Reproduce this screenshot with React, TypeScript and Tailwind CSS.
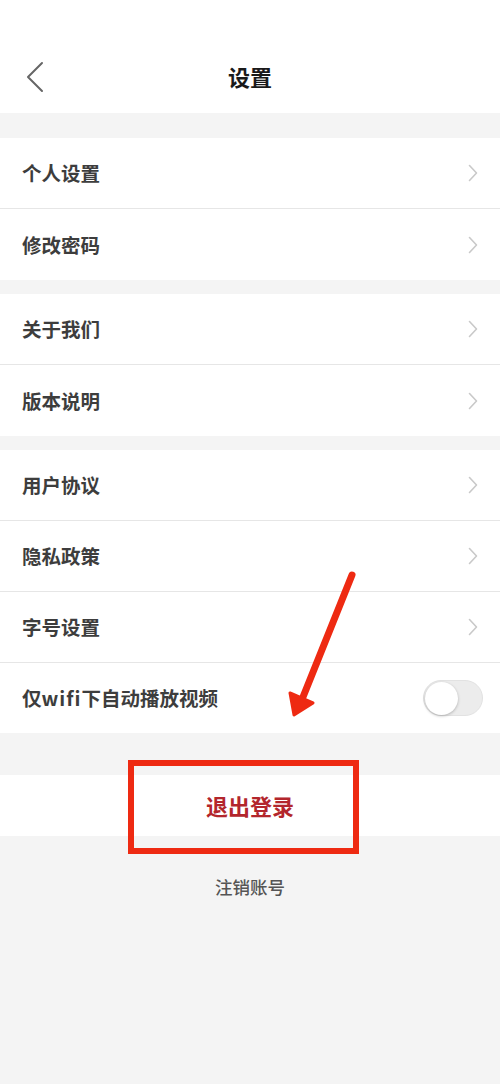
import React from "react";

const font = { fontFamily: '"Noto Sans CJK SC", "Noto Sans", sans-serif' };

function Chevron() {
  return (
    <svg width="10" height="18" viewBox="0 0 10 18" fill="none" className="shrink-0">
      <path d="M1.5 1.5 L8.5 9 L1.5 16.5" stroke="#c9c9c9" strokeWidth="1.6" strokeLinecap="round" strokeLinejoin="round" />
    </svg>
  );
}

function Row({ label, last }: { label: string; last?: boolean }) {
  return (
    <div className={`h-[71px] flex items-center justify-between pl-[22px] pr-[22px] bg-white ${last ? "" : "border-b border-[#e6e6e6]"}`}>
      <span className="text-[19.5px] font-semibold text-[#3d3d3d]">{label}</span>
      <Chevron />
    </div>
  );
}

function Toggle() {
  return (
    <div className="w-[60px] h-[36px] rounded-full bg-[#ececec] border border-[#e2e2e2] flex items-center px-[1px]">
      <div className="w-[33px] h-[33px] rounded-full bg-white shadow-[0_1px_3px_rgba(0,0,0,0.25)]" />
    </div>
  );
}

export default function App() {
  return (
    <div className="relative w-[500px] h-[1084px] bg-[#f4f4f4] overflow-hidden" style={font}>
      {/* header */}
      <div className="h-[113px] bg-white relative flex items-center justify-center pt-[40px]">
        <svg width="20" height="32" viewBox="0 0 20 32" fill="none" className="absolute left-[25px] top-[61px]">
          <path d="M17 2 L3 16 L17 30" stroke="#666" strokeWidth="2" strokeLinecap="round" strokeLinejoin="round" />
        </svg>
        <span className="text-[22px] font-bold text-[#1a1a1a]">设置</span>
      </div>

      <div className="h-[25px]" />
      <Row label="个人设置" />
      <Row label="修改密码" last />

      <div className="h-[14px]" />
      <Row label="关于我们" />
      <Row label="版本说明" last />

      <div className="h-[14px]" />
      <Row label="用户协议" />
      <Row label="隐私政策" />
      <Row label="字号设置" />
      <div className="h-[70px] flex items-center justify-between pl-[22px] pr-[17px] bg-white">
        <span className="text-[19.5px] font-semibold text-[#3d3d3d]">
          仅<span className="tracking-[1px]">wifi</span>下自动播放视频
        </span>
        <Toggle />
      </div>

      <div className="h-[42px]" />
      <div className="h-[61px] bg-white flex items-center justify-center">
        <span className="text-[22px] font-semibold text-[#b3262c]">退出登录</span>
      </div>

      <div className="flex justify-center pt-[38px]">
        <span className="text-[17.5px] font-medium text-[#555]">注销账号</span>
      </div>

      {/* annotation overlay */}
      <div className="absolute left-[128px] top-[760px] w-[231px] h-[94px] border-[6px] border-[#ee2a12]" />
      <svg className="absolute left-0 top-0 pointer-events-none" width="500" height="1084" viewBox="0 0 500 1084">
        <line x1="352" y1="575" x2="303" y2="697" stroke="#ee2a12" strokeWidth="7" strokeLinecap="round" />
        <polygon points="294,715 290,693 313,703" fill="#ee2a12" stroke="#ee2a12" strokeWidth="3" strokeLinejoin="round" />
      </svg>
    </div>
  );
}
